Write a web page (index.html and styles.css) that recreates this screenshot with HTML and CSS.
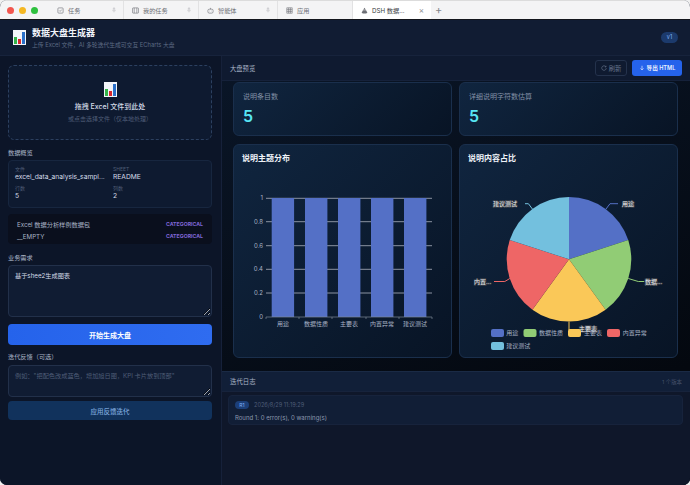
FILE: index.html
```html
<!DOCTYPE html>
<html lang="zh-CN">
<head>
    <meta charset="UTF-8">
    <meta name="viewport" content="width=device-width, initial-scale=1.0">
    <title>数据大盘生成器</title>
    <link rel="stylesheet" href="styles.css">
</head>
<body>
    <div class="window">
        <!-- 浏览器标签栏 -->
        <div class="tabbar">
            <div class="lights">
                <span class="light red"></span>
                <span class="light yellow"></span>
                <span class="light green"></span>
            </div>
            <div class="tab">
                <svg class="tab-icon" viewBox="0 0 8 8"><rect x="1" y="1" width="6" height="6" rx="1"/><path d="M2.6 4l1 1 1.8-2"/></svg>
                <span>任务</span>
                <svg class="pin" viewBox="0 0 6 8"><path d="M1.5 1h3M2 1v3L1 5.2h4L4 4V1M3 5.2V7.5"/></svg>
            </div>
            <div class="tab">
                <svg class="tab-icon" viewBox="0 0 8 8"><rect x="0.5" y="1" width="7" height="6" rx="1"/><path d="M2.5 1v6M5.5 1v6"/></svg>
                <span>我的任务</span>
                <svg class="pin" viewBox="0 0 6 8"><path d="M1.5 1h3M2 1v3L1 5.2h4L4 4V1M3 5.2V7.5"/></svg>
            </div>
            <div class="tab wide">
                <svg class="tab-icon" viewBox="0 0 8 8"><rect x="1" y="2.5" width="6" height="4.5" rx="1.6"/><path d="M4 2.5V1M2.8 4.6h.4M4.8 4.6h.4"/></svg>
                <span>智能体</span>
                <svg class="pin" viewBox="0 0 6 8"><path d="M1.5 1h3M2 1v3L1 5.2h4L4 4V1M3 5.2V7.5"/></svg>
            </div>
            <div class="tab">
                <svg class="tab-icon" viewBox="0 0 8 8"><rect x="1" y="1" width="6" height="6"/><path d="M1 3h6M1 5h6M3 1v6M5 1v6"/></svg>
                <span>应用</span>
            </div>
            <div class="tab active">
                <svg class="tab-icon solid" viewBox="0 0 8 8"><path d="M4 .8l1.5 2.4H2.5zM2.2 3.8h3.6L7.3 6.6 5.8 7.4H2.2L.7 6.6z"/></svg>
                <span>DSH 数据...</span>
                <span class="tab-close">×</span>
            </div>
            <span class="tab-add">+</span>
        </div>

        <header class="app-header">
            <svg class="chart-emoji" viewBox="0 0 13 15">
                <rect width="13" height="15" fill="#f3f5fa"/>
                <rect x="1" y="7" width="3" height="7" fill="#35b34a"/>
                <rect x="5" y="9" width="3" height="5" fill="#d8262c"/>
                <rect x="9" y="2" width="3" height="12" fill="#2a6fc9"/>
            </svg>
            <div class="app-titles">
                <h1>数据大盘生成器</h1>
                <p>上传 Excel 文件，AI 多轮迭代生成可交互 ECharts 大盘</p>
            </div>
            <span class="version">v1</span>
        </header>

        <div class="workspace">
            <aside class="sidebar">
                <div class="dropzone">
                    <svg class="chart-emoji" viewBox="0 0 13 15">
                        <rect width="13" height="15" fill="#f3f5fa"/>
                        <rect x="1" y="7" width="3" height="7" fill="#35b34a"/>
                        <rect x="5" y="9" width="3" height="5" fill="#d8262c"/>
                        <rect x="9" y="2" width="3" height="12" fill="#2a6fc9"/>
                    </svg>
                    <div class="drop-title">拖拽 Excel 文件到此处</div>
                    <div class="drop-hint">或点击选择文件（仅本地处理）</div>
                </div>

                <div class="side-label overview-label">数据概览</div>
                <div class="info-card">
                    <div class="info-item">
                        <span class="info-key">文件</span>
                        <span class="info-value">excel_data_analysis_sampl...</span>
                    </div>
                    <div class="info-item">
                        <span class="info-key">SHEET</span>
                        <span class="info-value">README</span>
                    </div>
                    <div class="info-item">
                        <span class="info-key">行数</span>
                        <span class="info-value">5</span>
                    </div>
                    <div class="info-item">
                        <span class="info-key">列数</span>
                        <span class="info-value">2</span>
                    </div>
                </div>
                <div class="column-list">
                    <div class="column-row"><span>Excel 数据分析样例数据包</span><b>CATEGORICAL</b></div>
                    <div class="column-row"><span>__EMPTY</span><b>CATEGORICAL</b></div>
                </div>

                <div class="side-label need-label">业务需求</div>
                <textarea class="need-input">基于shee2生成图表</textarea>
                <button class="btn-primary">开始生成大盘</button>

                <div class="side-label feedback-label">迭代反馈（可选）</div>
                <textarea class="feedback-input" placeholder="例如：&quot;把配色改成蓝色，增加旭日图，KPI 卡片放到顶部&quot;"></textarea>
                <button class="btn-secondary">应用反馈迭代</button>
            </aside>

            <main class="main">
                <div class="preview-bar">
                    <span>大盘预览</span>
                    <div class="preview-actions">
                        <button class="btn-ghost">
                            <svg viewBox="0 0 8 8"><path d="M6.5 2.4A3 3 0 1 0 7 4.2M6.7 1v1.6H5.1"/></svg>
                            刷新
                        </button>
                        <button class="btn-export">
                            <svg viewBox="0 0 8 8"><path d="M4 1v5.4M2 4.6l2 2 2-2"/></svg>
                            导出 HTML
                        </button>
                    </div>
                </div>

                <div class="preview-body">
                    <div class="kpi-card">
                        <div class="kpi-label">说明条目数</div>
                        <div class="kpi-value">5</div>
                    </div>
                    <div class="kpi-card">
                        <div class="kpi-label">详细说明字符数估算</div>
                        <div class="kpi-value">5</div>
                    </div>

                    <div class="chart-card">
                        <h2>说明主题分布</h2>
                        <svg class="chart" viewBox="0 0 217 191">
                            <g class="grid">
                                <path d="M32 32.3H198M32 55.7H198M32 79.7H198M32 103.3H198M32 127H198"/>
                            </g>
                            <g fill="#5470c6">
                                <rect x="37.7" y="32" width="22.4" height="119"/>
                                <rect x="71" y="32" width="22.4" height="119"/>
                                <rect x="104" y="32" width="22.4" height="119"/>
                                <rect x="137" y="32" width="22.4" height="119"/>
                                <rect x="170" y="32" width="22.4" height="119"/>
                            </g>
                            <path class="axis" d="M32 151H198M32 151v2M65 151v2M98 151v2M132 151v2M165 151v2M198 151v2"/>
                            <g class="tick-y">
                                <text x="29" y="34.4">1</text>
                                <text x="29" y="57.8">0.8</text>
                                <text x="29" y="81.8">0.6</text>
                                <text x="29" y="105.4">0.4</text>
                                <text x="29" y="129">0.2</text>
                                <text x="29" y="153">0</text>
                            </g>
                            <g class="tick-x">
                                <text x="49" y="160.4">用途</text>
                                <text x="82" y="160.4">数据性质</text>
                                <text x="115" y="160.4">主要表</text>
                                <text x="148" y="160.4">内置异常</text>
                                <text x="181" y="160.4">建议测试</text>
                            </g>
                        </svg>
                    </div>

                    <div class="chart-card">
                        <h2>说明内容占比</h2>
                        <svg class="chart" viewBox="0 0 217 191">
                            <path fill="#5470c6" d="M109 93.3V31A62.3 62.3 0 0 1 168.25 74.05Z"/>
                            <path fill="#91cc75" d="M109 93.3L168.25 74.05A62.3 62.3 0 0 1 145.62 143.7Z"/>
                            <path fill="#fac858" d="M109 93.3L145.62 143.7A62.3 62.3 0 0 1 72.38 143.7Z"/>
                            <path fill="#ee6666" d="M109 93.3L72.38 143.7A62.3 62.3 0 0 1 49.75 74.05Z"/>
                            <path fill="#73c0de" d="M109 93.3L49.75 74.05A62.3 62.3 0 0 1 109 31Z"/>
                            <g fill="none">
                                <path stroke="#5470c6" d="M146 43l4-5.3h8"/>
                                <path stroke="#91cc75" d="M168.3 112.5l10 3h6"/>
                                <path stroke="#fac858" d="M109 155.6V164h9"/>
                                <path stroke="#ee6666" d="M49.8 112.5l-5 3H34"/>
                                <path stroke="#73c0de" d="M72.4 43l-4-5.3H65"/>
                            </g>
                            <g class="pie-label">
                                <text x="162" y="40">用途</text>
                                <text x="185" y="118">数据...</text>
                                <text x="119" y="165">主要表</text>
                                <text x="14" y="118">内置...</text>
                                <text x="33" y="40">建议测试</text>
                            </g>
                            <g class="legend-swatch">
                                <rect x="31" y="163" width="13" height="8" rx="2" fill="#5470c6"/>
                                <rect x="63.5" y="163" width="13" height="8" rx="2" fill="#91cc75"/>
                                <rect x="108" y="163" width="13" height="8" rx="2" fill="#fac858"/>
                                <rect x="147" y="163" width="13" height="8" rx="2" fill="#ee6666"/>
                                <rect x="31" y="176" width="13" height="8" rx="2" fill="#73c0de"/>
                            </g>
                            <g class="legend-text">
                                <text x="46.3" y="169.2">用途</text>
                                <text x="79" y="169.2">数据性质</text>
                                <text x="124" y="169.2">主要表</text>
                                <text x="162.7" y="169.2">内置异常</text>
                                <text x="46.3" y="182.2">建议测试</text>
                            </g>
                        </svg>
                    </div>
                </div>

                <section class="log">
                    <div class="log-head">
                        <span>迭代日志</span>
                        <span class="log-count">1 个版本</span>
                    </div>
                    <div class="log-entry">
                        <div class="log-meta"><span class="round-badge">R1</span><span>2026/8/29 11:19:29</span></div>
                        <div class="log-text">Round 1: 0 error(s), 0 warning(s)</div>
                    </div>
                </section>
            </main>
        </div>
    </div>
</body>
</html>
```

FILE: styles.css
```css
* {
    box-sizing: border-box;
}
html, body {
    margin: 0;
    height: 100%;
    background-color: #f0f0f0;
    overflow: hidden;
}
body {
    font-family: Inter, "Noto Sans CJK SC", sans-serif;
    color: #d5dce8;
}
.window {
    width: 690px;
    height: 485px;
    display: flex;
    flex-direction: column;
    border-radius: 7px;
    overflow: hidden;
    background-color: #0c1528;
}

/* 标签栏 */
.tabbar {
    height: 20px;
    flex: none;
    display: flex;
    align-items: center;
    background-color: #f4f4f5;
    border-top: 1px solid #dcdcdc;
    border-bottom: 1px solid #14161c;
    font-size: 6.2px;
    color: #6d6f75;
}
.lights {
    width: 49px;
    flex: none;
    display: flex;
    gap: 5px;
    padding-left: 7px;
}
.light {
    width: 7px;
    height: 7px;
    border-radius: 50%;
}
.red { background-color: #f2564e; }
.yellow { background-color: #f5b823; }
.green { background-color: #2fc13f; }
.tab {
    width: 75px;
    height: 100%;
    flex: none;
    display: flex;
    align-items: center;
    gap: 4px;
    padding: 0 7px 0 8px;
    border-right: 1px solid #e2e2e3;
}
.tab.wide {
    width: 79px;
}
.tab:first-of-type {
    width: 74px;
}
.tab-icon {
    width: 7px;
    height: 7px;
    fill: none;
    stroke: #6d6f75;
    stroke-width: 0.7;
}
.tab-icon.solid {
    fill: #6d6f75;
    stroke: none;
}
.pin {
    width: 4px;
    height: 6px;
    margin-left: auto;
    fill: none;
    stroke: #a8a9ad;
    stroke-width: 0.6;
}
.tab.active {
    width: 78px;
    background-color: #fff;
    color: #3d3f45;
    border-right: none;
}
.tab-close {
    margin-left: auto;
    font-size: 8px;
    color: #8b8c91;
}
.tab-add {
    margin-left: 4px;
    font-size: 11px;
    color: #85868b;
}

/* 顶部标题 */
.app-header {
    height: 36px;
    flex: none;
    display: flex;
    align-items: center;
    padding: 0 12px 0 13px;
    background-color: #111c33;
    border-bottom: 1px solid #17233c;
}
.chart-emoji {
    width: 13px;
    height: 15px;
    flex: none;
}
.app-titles {
    margin-left: 6px;
}
.app-titles h1 {
    margin: 0 0 2px;
    font-size: 9px;
    line-height: 12px;
    font-weight: 700;
    color: #f1f5fb;
}
.app-titles p {
    margin: 0;
    font-size: 5.8px;
    line-height: 8px;
    color: #5d6b84;
}
.version {
    margin-left: auto;
    width: 17px;
    height: 11px;
    border-radius: 6px;
    background-color: #1c3a6c;
    color: #7fb0f5;
    font-size: 5.5px;
    line-height: 11px;
    text-align: center;
}

.workspace {
    flex: 1;
    min-height: 0;
    display: flex;
}

/* 左侧栏 */
.sidebar {
    width: 222px;
    flex: none;
    display: flex;
    flex-direction: column;
    padding: 9px 9px 0 8px;
    background-color: #0c1528;
    border-right: 1px solid #16213a;
}
.dropzone {
    height: 75px;
    flex: none;
    display: flex;
    flex-direction: column;
    align-items: center;
    padding-top: 16px;
    border: 1px dashed #2c4060;
    border-radius: 6px;
    background-color: #0e1a30;
}
.drop-title {
    margin-top: 5px;
    font-size: 7px;
    line-height: 10px;
    font-weight: 500;
    color: #d5dce8;
}
.drop-hint {
    margin-top: 2px;
    font-size: 6px;
    line-height: 9px;
    color: #4f5d77;
}
.side-label {
    flex: none;
    font-size: 6.2px;
    line-height: 9px;
    color: #a9b4c6;
}
.overview-label {
    margin-top: 8px;
}
.info-card {
    height: 48px;
    flex: none;
    margin-top: 3px;
    display: grid;
    grid-template-columns: 98px 1fr;
    grid-template-rows: 1fr 1fr;
    padding: 5px 6px 3px;
    border: 1px solid #17263f;
    border-radius: 4px;
    background-color: #0e1a30;
}
.info-item {
    display: flex;
    flex-direction: column;
}
.info-key {
    font-size: 5px;
    line-height: 7px;
    color: #4f5d77;
}
.info-value {
    font-size: 6.7px;
    line-height: 9px;
    color: #d5dce8;
    white-space: nowrap;
}
.column-list {
    height: 30px;
    flex: none;
    margin-top: 6px;
    padding: 4px 9px 0;
    border-radius: 4px;
    background-color: #0a0f1d;
}
.column-row {
    display: flex;
    justify-content: space-between;
    align-items: center;
    height: 12px;
    font-size: 6.2px;
    color: #a9b4c6;
}
.column-row b {
    font-size: 5.2px;
    font-weight: 700;
    color: #7f66d6;
}
.need-label {
    margin-top: 9px;
}
textarea {
    display: block;
    width: 100%;
    flex: none;
    padding: 5px 6px;
    border: 1px solid #22304a;
    border-radius: 4px;
    background-color: #101c33;
    color: #d5dce8;
    font-family: inherit;
    font-size: 6.2px;
    line-height: 9px;
    outline: none;
}
textarea::placeholder {
    color: #4f5d77;
}
.need-input {
    height: 52px;
    margin-top: 3px;
}
.btn-primary, .btn-secondary {
    display: block;
    width: 100%;
    flex: none;
    border: none;
    border-radius: 4px;
    font-family: inherit;
    font-size: 7px;
    font-weight: 600;
    cursor: pointer;
}
.btn-primary {
    height: 21px;
    margin-top: 7px;
    background: linear-gradient(90deg, #2563eb, #2f6cf0);
    color: #fff;
}
.feedback-label {
    margin-top: 7px;
}
.feedback-input {
    height: 32px;
    margin-top: 4px;
}
.btn-secondary {
    height: 19px;
    margin-top: 4px;
    background-color: #11325c;
    color: #7ea8dc;
    font-weight: 500;
    font-size: 6.5px;
}

/* 右侧主区域 */
.main {
    flex: 1;
    min-width: 0;
    display: flex;
    flex-direction: column;
    background: linear-gradient(160deg, #0a1628, #04080f 80%);
}
.preview-bar {
    height: 25px;
    flex: none;
    display: flex;
    align-items: center;
    justify-content: space-between;
    padding: 0 8px;
    background-color: #0f1a30;
    border-bottom: 1px solid #15213a;
    font-size: 6.3px;
    color: #a9b4c6;
}
.preview-actions {
    display: flex;
    gap: 5px;
}
.preview-actions button {
    height: 16px;
    display: flex;
    align-items: center;
    justify-content: center;
    gap: 2px;
    border-radius: 3px;
    font-family: inherit;
    padding: 0;
    cursor: pointer;
}
.preview-actions svg {
    width: 6px;
    height: 6px;
    fill: none;
    stroke: currentColor;
    stroke-width: 0.9;
}
.btn-ghost {
    width: 32px;
    border: 1px solid #24324c;
    background-color: #0f1a30;
    color: #67748c;
    font-size: 6.3px;
}
.btn-export {
    width: 50px;
    border: none;
    background-color: #2563eb;
    color: #eaf1ff;
    font-size: 5.6px;
    font-weight: 600;
}
.preview-body {
    height: 290px;
    flex: none;
    display: grid;
    grid-template-columns: 219px 219px;
    grid-template-rows: 54px 214px;
    gap: 8px 7px;
    padding: 1px 0 0 11px;
}
.kpi-card, .chart-card {
    border: 1px solid #1a2f4c;
    border-radius: 6px;
    background: linear-gradient(135deg, #10253f, #081425);
}
.kpi-card {
    padding: 9px 9px 0;
}
.kpi-label {
    font-size: 7px;
    line-height: 10px;
    color: #8491a7;
}
.kpi-value {
    margin-top: 4px;
    font-size: 16px;
    line-height: 20px;
    font-weight: 600;
    color: #58e6f4;
}
.chart-card {
    display: flex;
    flex-direction: column;
}
.chart-card h2 {
    margin: 0;
    padding: 7px 8px 2px;
    font-size: 8px;
    line-height: 12px;
    font-weight: 700;
    color: #eef2f8;
}
.chart {
    display: block;
    width: 217px;
    height: 191px;
    font-family: Inter, "Noto Sans CJK SC", sans-serif;
    font-size: 6px;
}
.grid path {
    stroke: #8b93a2;
    stroke-width: 1;
    fill: none;
}
.axis {
    stroke: #7d8797;
    stroke-width: 0.7;
    fill: none;
}
.tick-y text {
    text-anchor: end;
    fill: #a9b4c6;
}
.tick-x text {
    text-anchor: middle;
    fill: #a9b4c6;
}
.pie-label text {
    fill: #f0f2f5;
    stroke: #3a3f48;
    stroke-width: 1.4px;
    paint-order: stroke;
}
.legend-text text {
    fill: #a9b4c6;
}

/* 迭代日志 */
.log {
    flex: 1;
    min-height: 0;
    background-color: #0f172a;
    border-top: 1px solid #1a2a45;
}
.log-head {
    height: 20px;
    display: flex;
    align-items: center;
    justify-content: space-between;
    padding: 0 8px;
    background-color: #111f38;
    border-bottom: 1px solid #17233c;
    font-size: 6.4px;
    color: #a9b4c6;
}
.log-count {
    font-size: 5.4px;
    color: #45526a;
}
.log-entry {
    height: 30px;
    margin: 3px 7px 0 6px;
    padding: 5px 6px 0;
    border: 1px solid #17233c;
    border-radius: 4px;
    background-color: #111e36;
}
.log-meta {
    display: flex;
    align-items: center;
    gap: 5px;
    font-size: 5.6px;
    line-height: 8px;
    color: #4f5d77;
}
.round-badge {
    width: 14px;
    border-radius: 4px;
    background-color: #1c3f78;
    color: #7fb0f5;
    text-align: center;
    font-size: 5px;
}
.log-text {
    margin-top: 4px;
    font-size: 6px;
    line-height: 9px;
    color: #8d99ae;
}
```
